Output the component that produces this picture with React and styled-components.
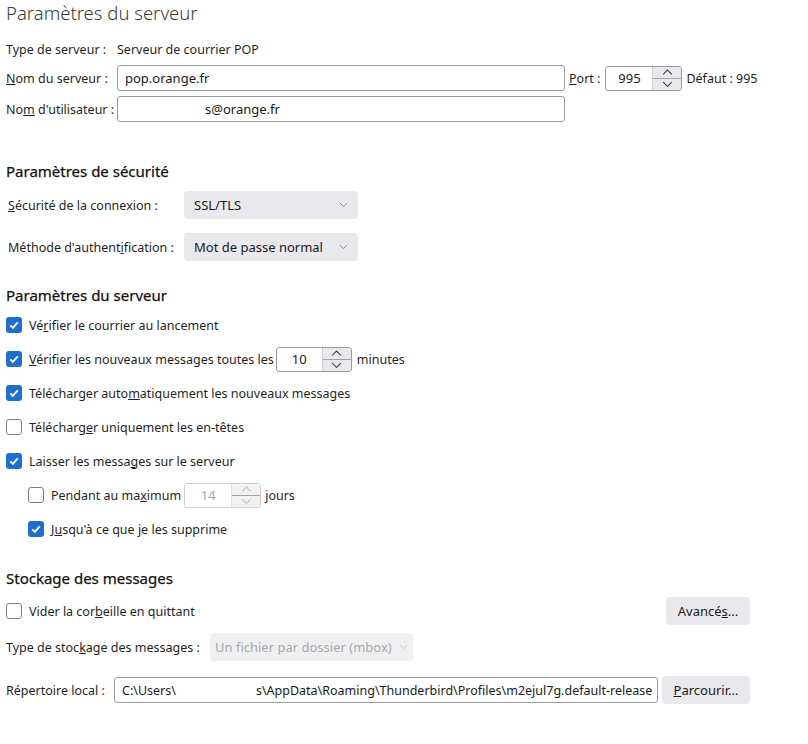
import React from "react";
import styled, { createGlobalStyle } from "styled-components";

const GlobalStyle = createGlobalStyle`
  body {
    margin: 0;
    background: #fff;
    font-family: "Noto Sans", "Open Sans", sans-serif;
    font-size: 12.5px;
    color: #1f1f1f;
  }
`;

const Page = styled.div`
  width: 744px;
  padding-left: 6px;
`;

const Title = styled.h1`
  margin: 0;
  font-size: 18.5px;
  font-weight: 300;
  line-height: 26px;
  color: #3a3a3a;
`;

const Heading = styled.h2`
  margin: ${(p) => p.$mt}px 0 0 0;
  font-size: 15px;
  font-weight: 400;
  line-height: 20px;
  height: 20px;
  color: #111;
  -webkit-text-stroke: 0.25px #111;
`;

const Row = styled.div`
  display: flex;
  align-items: center;
  height: ${(p) => p.$h || 26}px;
  margin-top: ${(p) => p.$mt || 0}px;
  margin-left: ${(p) => p.$indent || 0}px;
  justify-content: ${(p) => (p.$spread ? "space-between" : "flex-start")};
`;

const Label = styled.span`
  width: ${(p) => p.$w}px;
  flex-shrink: 0;
  white-space: nowrap;
`;

const Text = styled.span`
  margin-left: ${(p) => p.$ml || 0}px;
  white-space: nowrap;
  flex-shrink: 0;
`;

const TextBox = styled.div`
  box-sizing: border-box;
  width: ${(p) => p.$w}px;
  height: 26px;
  flex-shrink: 0;
  border: 1px solid #9a9a9a;
  border-radius: 3px;
  padding: 0 7px;
  display: flex;
  align-items: center;
  font-size: ${(p) => p.$fs || 13}px;
  overflow: hidden;
  white-space: nowrap;
  color: #1a1a1a;
`;

const Blank = styled.span`
  display: inline-block;
  width: ${(p) => p.$w}px;
  flex-shrink: 0;
`;

const Select = styled.div`
  box-sizing: border-box;
  width: ${(p) => p.$w}px;
  height: 28px;
  border-radius: 4px;
  background: ${(p) => (p.$disabled ? "#f0f0f2" : "#e9e9ed")};
  color: ${(p) => (p.$disabled ? "#a8a8a8" : "#1a1a1a")};
  display: flex;
  align-items: center;
  justify-content: space-between;
  padding: 0 ${(p) => (p.$disabled ? 5 : 10)}px;
  white-space: nowrap;
  font-size: 13px;
  flex-shrink: 0;
`;

const Spin = styled.div`
  box-sizing: border-box;
  width: ${(p) => p.$w}px;
  height: 25px;
  border: 1px solid ${(p) => (p.$disabled ? "#d0d0d0" : "#9a9a9a")};
  border-radius: 3px;
  display: flex;
  margin-left: ${(p) => p.$ml || 0}px;
  overflow: hidden;
  flex-shrink: 0;
`;

const SpinValue = styled.div`
  flex: 1;
  display: flex;
  align-items: center;
  justify-content: center;
  font-size: 13px;
  color: ${(p) => (p.$disabled ? "#a8a8a8" : "#1a1a1a")};
`;

const SpinButtons = styled.div`
  width: 28px;
  display: flex;
  flex-direction: column;
  background: ${(p) => (p.$disabled ? "#f2f2f4" : "#e9e9ed")};
  border-left: 1px solid ${(p) => (p.$disabled ? "#e0e0e0" : "#cfcfd6")};
`;

const SpinHalf = styled.div`
  flex: 1;
  display: flex;
  align-items: center;
  justify-content: center;
  border-top: ${(p) => (p.$bottom ? "1px solid #a0a0a8" : "none")};
`;

const Check = styled.div`
  box-sizing: border-box;
  width: 16px;
  height: 16px;
  border-radius: 3px;
  flex-shrink: 0;
  margin-right: 7px;
  background: ${(p) => (p.$on ? "#1f6fcf" : "#fff")};
  border: ${(p) => (p.$on ? "none" : "1.5px solid #7d7d85")};
  display: flex;
  align-items: center;
  justify-content: center;
`;

const CheckList = styled.div`
  display: flex;
  flex-direction: column;
  gap: 10px;
  margin-top: 8px;
`;

const Button = styled.div`
  box-sizing: border-box;
  width: ${(p) => p.$w}px;
  height: 28px;
  border-radius: 4px;
  background: #e9e9ed;
  display: flex;
  align-items: center;
  justify-content: center;
  font-size: 13px;
  color: #1a1a1a;
  flex-shrink: 0;
`;

const Chevron = ({ down = true, color = "#8a8a8a", w = 9 }) => (
  <svg width={w} height={w / 2 + 1} viewBox="0 0 10 6">
    <path
      d={down ? "M1 1 L5 5 L9 1" : "M1 5 L5 1 L9 5"}
      fill="none"
      stroke={color}
      strokeWidth="1"
    />
  </svg>
);

const CheckBox = ({ on }) => (
  <Check $on={on}>
    {on && (
      <svg width="12" height="12" viewBox="0 0 12 12">
        <path d="M2.3 6.3 L4.8 8.8 L9.8 3.3" fill="none" stroke="#fff" strokeWidth="1.9" />
      </svg>
    )}
  </Check>
);

const Spinner = ({ value, w, ml, disabled }) => (
  <Spin $w={w} $ml={ml} $disabled={disabled}>
    <SpinValue $disabled={disabled}>{value}</SpinValue>
    <SpinButtons $disabled={disabled}>
      <SpinHalf>
        <Chevron down={false} w={11} color={disabled ? "#c0c0c0" : "#444"} />
      </SpinHalf>
      <SpinHalf $bottom>
        <Chevron w={11} color={disabled ? "#c0c0c0" : "#444"} />
      </SpinHalf>
    </SpinButtons>
  </Spin>
);

export default function App() {
  return (
    <Page>
      <GlobalStyle />
      <Title>Paramètres du serveur</Title>

      <Row $h={20} $mt={13}>
        <Label $w={111}>Type de serveur :</Label>
        <Text>Serveur de courrier POP</Text>
      </Row>
      <Row $mt={6}>
        <Label $w={111}>
          <u>N</u>om du serveur :
        </Label>
        <TextBox $w={448}>pop.orange.fr</TextBox>
        <Text $ml={4}>
          <u>P</u>ort :
        </Text>
        <Spinner value="995" w={77} ml={5} />
        <Text $ml={4}>Défaut : 995</Text>
      </Row>
      <Row $mt={5}>
        <Label $w={111}>
          No<u>m</u> d'utilisateur :
        </Label>
        <TextBox $w={448}>
          <Blank $w={80} />
          s@orange.fr
        </TextBox>
      </Row>

      <Heading $mt={39}>Paramètres de sécurité</Heading>
      <Row $h={28} $mt={10} $indent={2}>
        <Label $w={176}>
          <u>S</u>écurité de la connexion :
        </Label>
        <Select $w={174}>
          SSL/TLS
          <Chevron />
        </Select>
      </Row>
      <Row $h={28} $mt={14} $indent={2}>
        <Label $w={176}>
          Méthode d'authent<u>i</u>fication :
        </Label>
        <Select $w={174}>
          Mot de passe normal
          <Chevron />
        </Select>
      </Row>

      <Heading $mt={24}>Paramètres du serveur</Heading>
      <CheckList>
        <Row $h={24}>
          <CheckBox on />
          <Text>
            Vé<u>r</u>ifier le courrier au lancement
          </Text>
        </Row>
        <Row $h={24}>
          <CheckBox on />
          <Text>
            <u>V</u>érifier les nouveaux messages toutes les
          </Text>
          <Spinner value="10" w={76} ml={2} />
          <Text $ml={5}>minutes</Text>
        </Row>
        <Row $h={24}>
          <CheckBox on />
          <Text>
            Télécharger auto<u>m</u>atiquement les nouveaux messages
          </Text>
        </Row>
        <Row $h={24}>
          <CheckBox />
          <Text>
            Télécharg<u>e</u>r uniquement les en-têtes
          </Text>
        </Row>
        <Row $h={24}>
          <CheckBox on />
          <Text>
            Laisser les messa<u>g</u>es sur le serveur
          </Text>
        </Row>
        <Row $h={24} $indent={22}>
          <CheckBox />
          <Text>
            Pendant au ma<u>x</u>imum
          </Text>
          <Spinner value="14" w={77} ml={3} disabled />
          <Text $ml={4}>jours</Text>
        </Row>
        <Row $h={24} $indent={22}>
          <CheckBox on />
          <Text>
            J<u>u</u>squ'à ce que je les supprime
          </Text>
        </Row>
      </CheckList>

      <Heading $mt={27}>Stockage des messages</Heading>
      <Row $h={28} $mt={9} $spread>
        <Row $h={28}>
          <CheckBox />
          <Text>
            Vider la cor<u>b</u>eille en quittant
          </Text>
        </Row>
        <Button $w={84}>
          Avancé<u>s</u>...
        </Button>
      </Row>
      <Row $h={28} $mt={8}>
        <Label $w={204}>
          Type de stoc<u>k</u>age des messages :
        </Label>
        <Select $w={203} $disabled>
          Un fichier par dossier (mbox)
          <Chevron color="#c4c4c4" />
        </Select>
      </Row>
      <Row $h={28} $mt={15} $spread>
        <Label $w={104}>Répertoire local :</Label>
        <TextBox $w={544} $fs={12.5}>
          C:\Users\
          <Blank $w={80} />
          s\AppData\Roaming\Thunderbird\Profiles\m2ejul7g.default-release
        </TextBox>
        <Button $w={88}>
          <u>P</u>arcourir...
        </Button>
      </Row>
    </Page>
  );
}
